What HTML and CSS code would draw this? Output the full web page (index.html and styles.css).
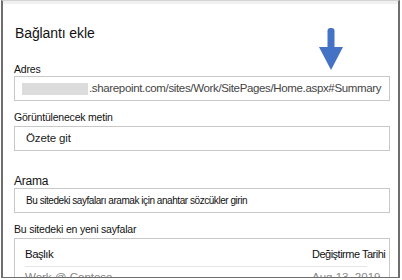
FILE: index.html
```html
<!DOCTYPE html>
<html lang="tr">
<head>
    <meta charset="UTF-8">
    <meta name="viewport" content="width=device-width, initial-scale=1.0">
    <title>Bağlantı ekle</title>
    <link rel="stylesheet" href="styles.css">
</head>
<body>

<div class="dialog">
    <h1>Bağlantı ekle</h1>

    <div class="field field-address">
        <label>Adres</label>
        <div class="input">
            <span class="blur"></span>.sharepoint.com/sites/Work/SitePages/Home.aspx#Summary
        </div>
        <svg class="arrow" width="26" height="44" viewBox="0 0 26 44">
            <rect x="9.5" y="0" width="7" height="22" rx="3" fill="#4472c4"/>
            <polygon points="1,19 25,19 13,42" fill="#4472c4"/>
        </svg>
    </div>

    <div class="field">
        <label>Görüntülenecek metin</label>
        <div class="input input-pad">Özete git</div>
    </div>

    <div class="field field-search">
        <label class="label-big">Arama</label>
        <div class="input input-pad input-narrow">Bu sitedeki sayfaları aramak için anahtar sözcükler girin</div>
    </div>

    <div class="field">
        <label class="label-narrow">Bu sitedeki en yeni sayfalar</label>
        <div class="pages">
            <div class="pages-head">
                <span>Başlık</span>
                <span class="col-date">Değiştirme Tarihi</span>
            </div>
            <div class="pages-row">
                <span>Work @ Contoso</span>
                <span class="col-date">Aug 13, 2019</span>
            </div>
        </div>
    </div>
</div>

</body>
</html>
```

FILE: styles.css
```css
body {
    margin: 0;
    background: white;
    font-family: "Liberation Sans", Arial, sans-serif;
    color: #222;
}

.dialog {
    width: 399px;
    height: 278px;
    margin-left: 1px;
    border: 2px solid #6e6e6e;
    border-top: 1px solid #d4d4d4;
    border-bottom-width: 1px;
    padding: 0 8px 0 11px;
    box-sizing: border-box;
    overflow: hidden;
    box-shadow: inset 0 3px 0 #f1f1f1;
}

h1 {
    font-weight: normal;
    font-size: 14px;
    margin: 25px 0 0 1px;
    line-height: 14px;
    letter-spacing: -0.1px;
    color: #111;
}

.field {
    position: relative;
}

.field label {
    display: block;
    font-size: 10.5px;
    line-height: 12px;
    letter-spacing: -0.2px;
    color: #111;
}

.field-address {
    margin-top: 23px;
}

.field-address label {
    margin-bottom: 1px;
}

.input {
    height: 25px;
    border: 1px solid #c8c8c8;
    box-sizing: border-box;
    font-size: 11.5px;
    letter-spacing: -0.35px;
    line-height: 23px;
    color: #444;
    padding-left: 7px;
    display: flex;
    align-items: center;
    white-space: nowrap;
    margin-bottom: 10px;
}

.blur {
    display: inline-block;
    width: 66px;
    height: 12px;
    margin-right: 1px;
    background: #dcdcdc;
}

.input-pad {
    padding-left: 11px;
    letter-spacing: -0.15px;
    color: #222;
}

.input-narrow {
    font-size: 10px;
    letter-spacing: -0.45px;
    color: #111;
}

.arrow {
    position: absolute;
    right: 46px;
    top: -35px;
}

.field + .field label {
    margin-bottom: 3px;
}

.field-search {
    margin-top: 24px;
}

.field-search label.label-big {
    font-size: 12px;
    margin-bottom: 1px;
}

.label-narrow {
    letter-spacing: -0.5px;
}

.pages {
    border: 1px solid #c8c8c8;
    padding: 0 22px 0 10px;
    height: 60px;
}

.pages-head {
    display: flex;
    justify-content: space-between;
    font-size: 11.5px;
    letter-spacing: -0.5px;
    padding: 9px 0 6px;
    border-bottom: 1px solid #e6e6e6;
    color: #111;
}

.pages-head .col-date {
    font-size: 11px;
}

.pages-row {
    display: flex;
    justify-content: space-between;
    font-size: 11.5px;
    color: #888;
    padding-top: 4px;
}

.col-date {
    width: 55px;
    white-space: nowrap;
}
```
